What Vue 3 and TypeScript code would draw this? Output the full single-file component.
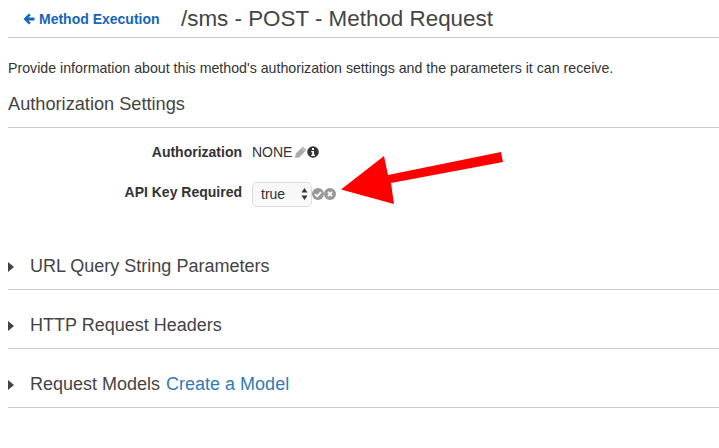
<script setup lang="ts">
const sections = [
  { title: 'URL Query String Parameters' },
  { title: 'HTTP Request Headers' },
  { title: 'Request Models', link: 'Create a Model' }
]
</script>

<template>
  <main class="page">
    <header class="top">
      <a class="back">
        <svg class="back-icon" viewBox="0 0 12 12" width="12" height="12">
          <path d="M6 0.500 L0.500 6 L6 11.500 L7.800 9.700 L5.400 7.400 H11.500 V4.600 H5.400 L7.800 2.300 Z" fill="#1566b7" />
        </svg>
        Method Execution
      </a>
      <h1>/sms - POST - Method Request</h1>
    </header>

    <p class="intro">Provide information about this method's authorization settings and the parameters it can receive.</p>

    <h2>Authorization Settings</h2>

    <div class="settings">
      <div class="row">
        <span class="label">Authorization</span>
        <span class="value">NONE</span>
        <svg class="pencil" viewBox="0 0 12 12" width="12" height="12">
          <path d="M0 12 L0.800 7.600 L7.800 0.600 L11.400 4.200 L4.400 11.200 Z" fill="#aaa" />
          <path d="M6.600 1.800 L10.200 5.400" stroke="#fff" stroke-width="0.6" />
        </svg>
        <svg class="info" viewBox="0 0 12 12" width="12" height="12">
          <circle cx="6" cy="6" r="5.800" fill="#333" />
          <rect x="5" y="2" width="2" height="2" fill="#fff" />
          <path d="M4.200 5 H7 V8.800 H8 V10 H4.200 V8.800 H5.200 V6.200 H4.200 Z" fill="#fff" />
        </svg>
      </div>
      <div class="row second">
        <span class="label">API Key Required</span>
        <div class="select">
          <span>true</span>
          <svg viewBox="0 0 7 14" width="7" height="14">
            <path d="M3.500 1 L6.500 5.500 H0.500 Z M3.500 13 L0.500 8.500 H6.500 Z" fill="#333" />
          </svg>
        </div>
        <svg class="round" viewBox="0 0 12 12" width="12" height="12">
          <circle cx="6" cy="6" r="6" fill="#999" />
          <path d="M3 6.200 L5.200 8.300 L9 4.200" fill="none" stroke="#fff" stroke-width="1.700" />
        </svg>
        <svg class="round" viewBox="0 0 12 12" width="12" height="12">
          <circle cx="6" cy="6" r="6" fill="#999" />
          <path d="M3.900 3.900 L8.100 8.100 M8.100 3.900 L3.900 8.100" fill="none" stroke="#fff" stroke-width="1.800" />
        </svg>
      </div>
    </div>

    <div class="sections">
      <section v-for="s in sections" :key="s.title" class="section">
        <svg class="caret" viewBox="0 0 6 10" width="6" height="10">
          <path d="M0 0 L6 5 L0 10 Z" fill="#444" />
        </svg>
        <span>{{ s.title }} <a v-if="s.link" class="link">{{ s.link }}</a></span>
      </section>
    </div>

    <svg class="arrow" viewBox="0 0 719 448" width="719" height="448">
      <path d="M341 189.500 L384 156 L388 175 L501 152 L503 162 L391 183 L394 204 Z" fill="#fe0000" />
    </svg>
  </main>
</template>

<style>
html, body {
  background: #fff;
}
</style>

<style scoped>
.page {
  position: relative;
  width: 719px;
  height: 448px;
  overflow: hidden;
  padding-left: 8px;
  box-sizing: border-box;
  font-family: "Liberation Sans", Arial, sans-serif;
  color: #444;
}

.top {
  display: flex;
  align-items: center;
  height: 37px;
  border-bottom: 1px solid #ccc;
  padding-left: 15px;
}

.back {
  display: flex;
  align-items: center;
  gap: 4px;
  width: 158px;
  font-size: 14px;
  font-weight: bold;
  color: #1566b7;
}

.top h1 {
  margin: 0;
  font-size: 22.400px;
  font-weight: normal;
  color: #444;
}

.intro {
  margin: 22px 0 0;
  font-size: 14.200px;
  line-height: 17px;
  color: #333;
}

h2 {
  margin: 17px 0 0;
  padding-bottom: 13px;
  font-size: 18.200px;
  line-height: 20px;
  font-weight: normal;
  border-bottom: 1px solid #ccc;
  color: #444;
}

.settings {
  margin-top: 15px;
}

.row {
  display: flex;
  align-items: center;
  height: 18px;
  font-size: 14px;
  color: #333;
}

.second {
  height: 26px;
  margin-top: 18px;
}

.label {
  width: 234px;
  text-align: right;
  margin-right: 10px;
  font-weight: bold;
}

.pencil {
  margin-left: 3px;
}

.select {
  display: flex;
  align-items: center;
  justify-content: space-between;
  box-sizing: border-box;
  width: 60px;
  height: 25px;
  margin-top: 4px;
  padding: 0 3px 0 8px;
  border: 1px solid #ddd;
  border-radius: 5px;
  background: #f8f8f8;
  font-size: 14px;
}

.round {
  margin-top: 3px;
}

.sections {
  margin-top: 37px;
}

.section {
  display: flex;
  align-items: center;
  gap: 16px;
  box-sizing: border-box;
  height: 48px;
  padding-top: 2px;
  margin-top: 11px;
  font-size: 18px;
  color: #444;
  border-bottom: 1px solid #ccc;
}

.link {
  margin-left: 1px;
  color: #337ab7;
}

.arrow {
  position: absolute;
  left: 0;
  top: 0;
}
</style>
